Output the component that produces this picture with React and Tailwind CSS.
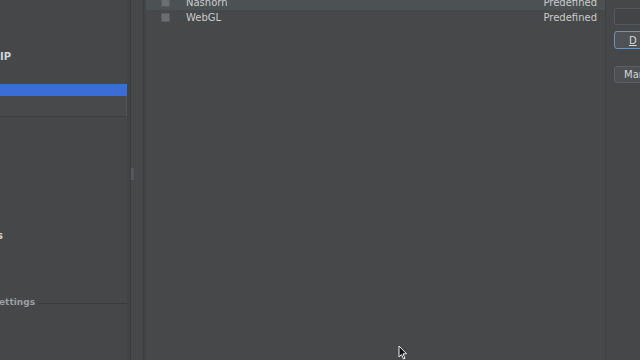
import React from "react"

const font = { fontFamily: '"DejaVu Sans", "Liberation Sans", sans-serif' }

const Row = ({ name, selected }) => (
  <div className={`flex flex-row items-center h-[15px] pl-[15px] pr-[8px] ${selected ? "bg-[#4c5153]" : ""}`}>
    <div className="w-[9px] h-[9px] bg-[#6b6e70] border border-[#5a5d5f] rounded-[1px]" />
    <span className="ml-[16px] text-[10px] text-[#c9cbcc]">{name}</span>
    <span className="ml-auto text-[10px] text-[#c9cbcc]">Predefined</span>
  </div>
)

const App = () => {
  return (
    <div style={font} className="w-[640px] h-[360px] bg-[#454749] flex flex-row overflow-hidden relative">
      {/* left settings tree */}
      <div className="w-[127px] flex flex-col shrink-0">
        <div className="mt-[50px] h-[14px] text-[10px] font-bold text-[#d4d4d4] leading-[14px]">IP</div>
        <div className="mt-[20px] h-[12px] bg-[#3a6ed6]" />
        <div className="h-[21px] bg-[#47494b] border-b border-[#3e4042] border-r border-r-[#505254]" />
        <div className="mt-[112px] h-[14px] text-[10px] font-bold text-[#d4d4d4] leading-[14px] -ml-[3px]">s</div>
        <div className="mt-[53px] flex flex-row items-center h-[14px]">
          <span className="text-[9px] font-bold text-[#9c9ea0] -ml-[1px]">ettings</span>
          <div className="ml-[3px] flex-1 h-[1px] bg-[#3a3c3e]" />
        </div>
      </div>

      {/* splitter */}
      <div className="w-[19px] shrink-0 flex flex-row">
        <div className="w-[3px] bg-[#414345]" />
        <div className="w-[1px] bg-[#3b3d3f]" />
        <div className="w-[3px] flex flex-col">
          <div className="h-[168px]" />
          <div className="h-[12px] bg-[#55585a]" />
        </div>
        <div className="w-[9px]" />
        <div className="w-[1px] bg-[#3d3f41]" />
        <div className="w-[2px] bg-[#424446]" />
      </div>

      {/* main table */}
      <div className="w-[459px] shrink-0 flex flex-col bg-[#464849]">
        <div className="-mt-[5px]">
          <Row name="Nashorn" selected />
          <Row name="WebGL" />
        </div>
      </div>

      {/* right buttons */}
      <div className="flex-1 flex flex-col pl-[8px] border-l border-[#3f4143]">
        <div className="mt-[8px] h-[17px] border border-[#55585a] bg-[#424446] rounded-[2px] -mr-[4px]" />
        <div className="mt-[6px] h-[18px] border border-[#6f92b8] bg-[#4f5254] rounded-[3px] -mr-[4px] flex items-center pl-[14px] text-[10px] text-[#d6d6d6] underline">D</div>
        <div className="mt-[17px] h-[17px] border border-[#5c5f61] bg-[#4d5052] rounded-[3px] -mr-[4px] flex items-center pl-[9px] text-[10px] text-[#d6d6d6]">Manage</div>
      </div>

      {/* mouse cursor */}
      <svg className="absolute left-[398px] top-[345px]" width="10" height="15" viewBox="0 0 10 15">
        <path d="M1 1 L1 12 L3.5 9.5 L5.5 14 L7 13.3 L5 8.8 L8.5 8.8 Z" fill="#111" stroke="#eee" strokeWidth="1" />
      </svg>
    </div>
  )
}

export default App
